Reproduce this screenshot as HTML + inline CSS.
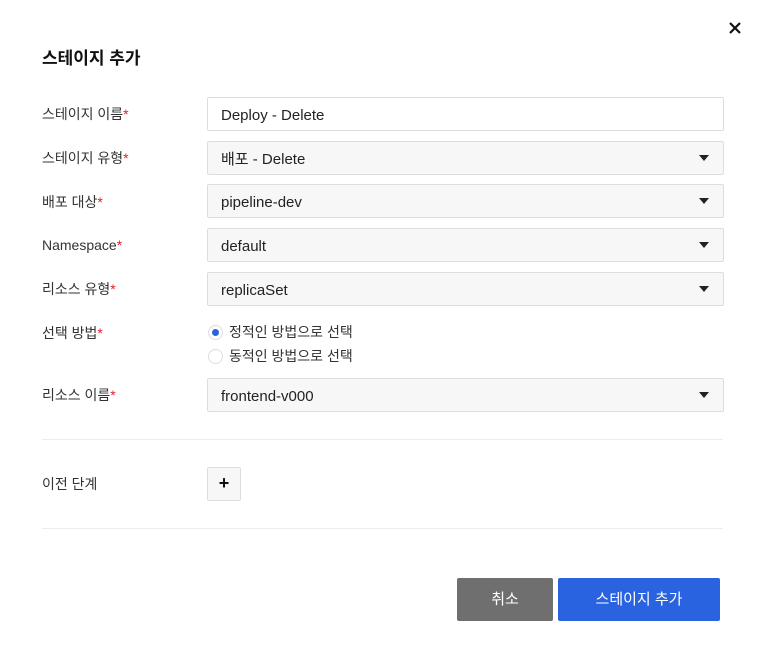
<!DOCTYPE html>
<html><head><meta charset="utf-8"><style>
*{box-sizing:border-box;margin:0;padding:0}
body{width:765px;height:658px;background:#fff;position:relative;font-family:"Liberation Sans","Noto Sans CJK KR",sans-serif;color:#222;overflow:hidden}
.a{position:absolute}
.t{left:42px;top:44px;font-size:17px;font-weight:bold;color:#111}
.lb{left:42px;font-size:14px;color:#333;line-height:20px}
.lb i{color:#e0202a;font-style:normal}
.f{left:207px;width:517px;height:34px;border:1px solid #ddd;border-radius:2px;background:#f7f7f7;font-size:15px;line-height:35px;padding-left:13px;color:#222}
.f.w{background:#fff}
.f .ar{position:absolute;right:14px;top:13px;width:0;height:0;border-left:5px solid transparent;border-right:5px solid transparent;border-top:6px solid #222}
.r{left:207px;font-size:14px;line-height:20px;color:#333;padding-left:22px}
.r .c{position:absolute;left:1px;top:3px;width:15px;height:15px;border-radius:50%;border:1px solid #ddd;background:#fff}
.r .c b{position:absolute;left:3px;top:3px;width:7px;height:7px;border-radius:50%;background:#2a63e0}
.hr{left:42px;width:681px;height:1px;background:#ececec}
.btn{top:578px;height:43px;color:#fff;font-size:15px;text-align:center;line-height:43px;border-radius:2px}
</style></head><body>
<svg class="a" style="left:729px;top:22px" width="12" height="12" viewBox="0 0 12 12"><path d="M1 1L11 11M11 1L1 11" stroke="#111" stroke-width="2.2"/></svg>
<div class="a t">스테이지 추가</div>

<div class="a lb" style="top:104px">스테이지 이름<i>*</i></div>
<div class="a f w" style="top:97px">Deploy - Delete</div>
<div class="a lb" style="top:148px">스테이지 유형<i>*</i></div>
<div class="a f" style="top:141px">배포 - Delete<span class="ar"></span></div>
<div class="a lb" style="top:192px">배포 대상<i>*</i></div>
<div class="a f" style="top:184px">pipeline-dev<span class="ar"></span></div>
<div class="a lb" style="top:235px">Namespace<i>*</i></div>
<div class="a f" style="top:228px">default<span class="ar"></span></div>
<div class="a lb" style="top:279px">리소스 유형<i>*</i></div>
<div class="a f" style="top:272px">replicaSet<span class="ar"></span></div>
<div class="a lb" style="top:323px">선택 방법<i>*</i></div>
<div class="a r" style="top:322px"><span class="c"><b></b></span>정적인 방법으로 선택</div>
<div class="a r" style="top:346px"><span class="c"></span>동적인 방법으로 선택</div>
<div class="a lb" style="top:385px">리소스 이름<i>*</i></div>
<div class="a f" style="top:378px">frontend-v000<span class="ar"></span></div>

<div class="a hr" style="top:439px"></div>
<div class="a lb" style="top:474px">이전 단계</div>
<div class="a" style="left:207px;top:467px;width:34px;height:34px;border:1px solid #ddd;border-radius:2px;background:#f7f7f7;text-align:center;line-height:31px;font-size:18px;font-weight:bold;color:#111">+</div>
<div class="a hr" style="top:528px"></div>

<div class="a btn" style="left:457px;width:96px;background:#6f6f6f">취소</div>
<div class="a btn" style="left:558px;width:162px;background:#2a63e0">스테이지 추가</div>
</body></html>
